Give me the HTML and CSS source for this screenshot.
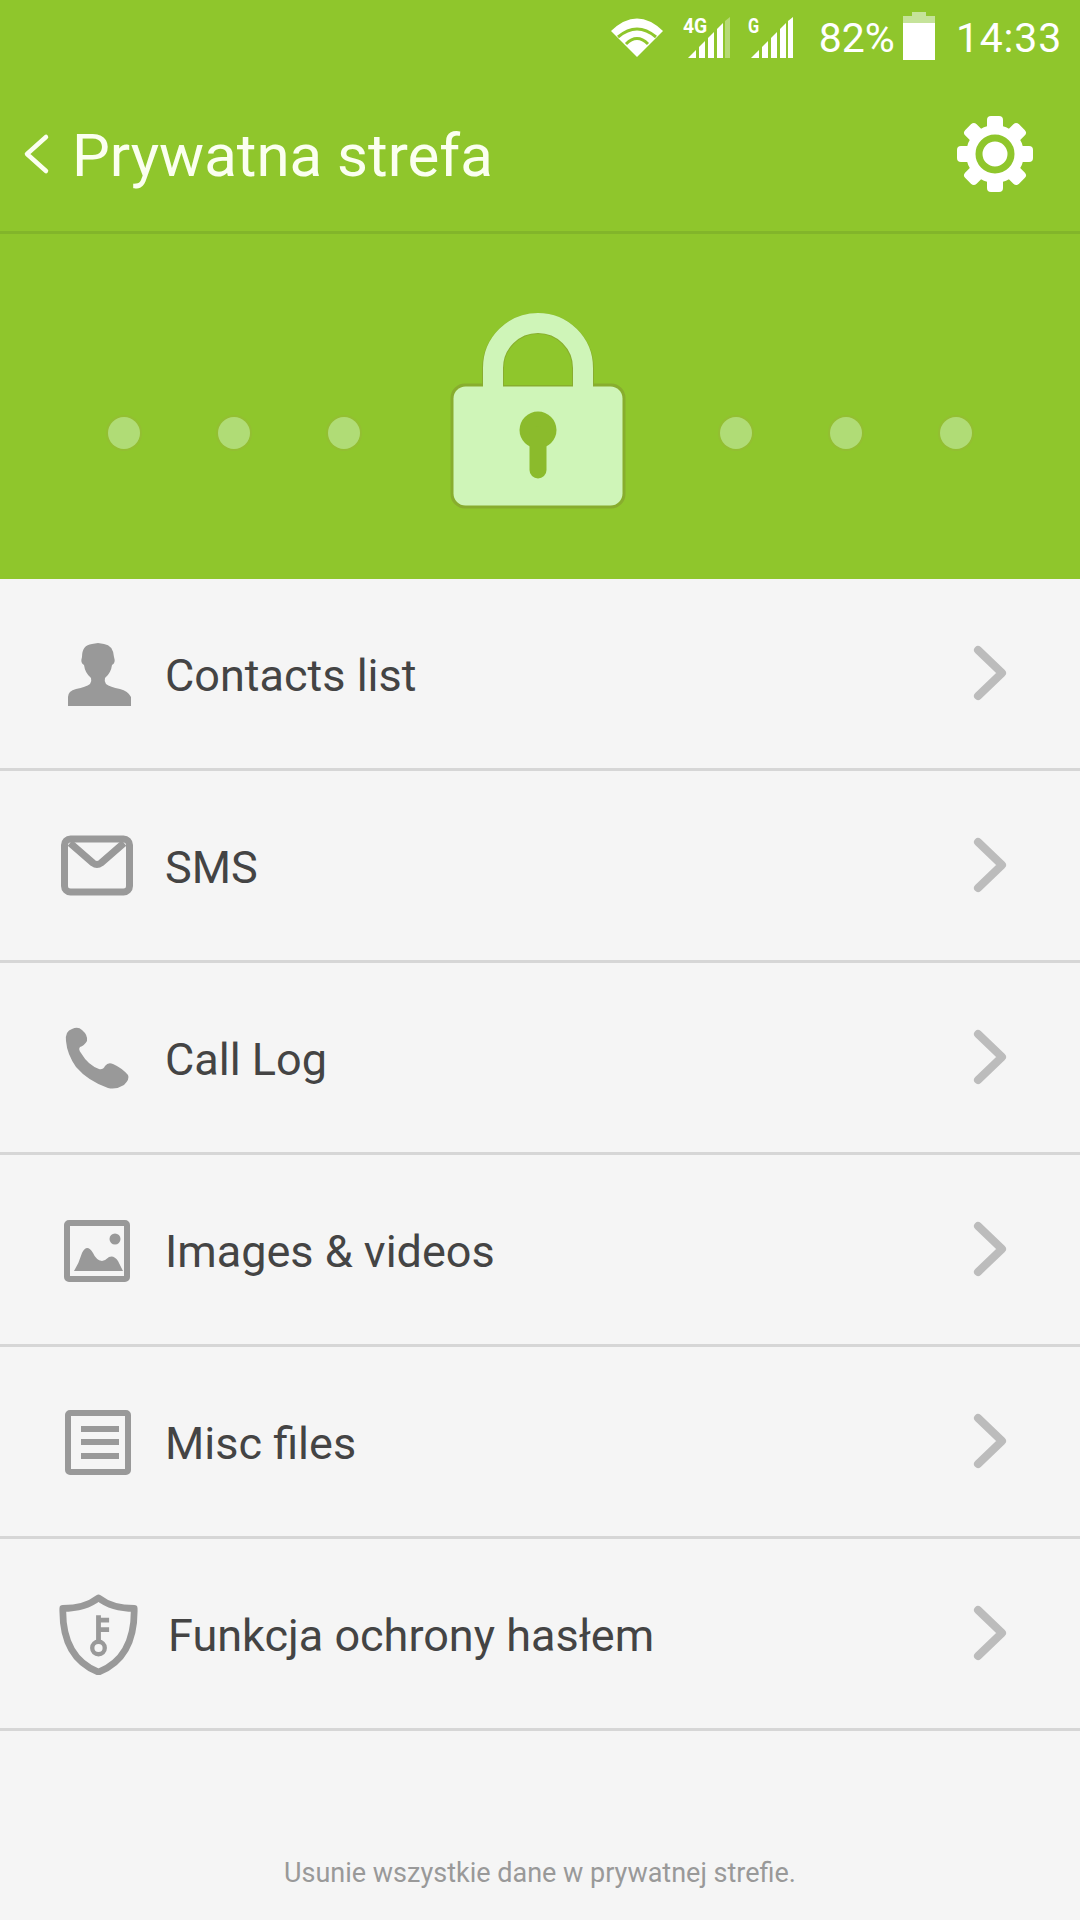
FILE: index.html
```html
<!DOCTYPE html>
<html lang="en">
<head>
  <meta charset="UTF-8" />
  <title>Prywatna strefa</title>
  <link rel="stylesheet" href="styles.css">
</head>
<body>
  <div class="status-bar">
    <svg class="ic-wifi" width="54" height="40" viewBox="0 0 54 40">
      <path d="M1 13Q27 -12 53 13L27 39Z" fill="#fff"/>
      <g fill="none" stroke="#8fc62c" stroke-width="3">
        <path d="M8 19Q27 3 46 19"/>
        <path d="M16 26Q27 15 38 26"/>
      </g>
    </svg>
    <div class="net">
      <span class="net-label net-label-4g">4G</span>
      <svg width="42" height="42" viewBox="0 0 42 42" fill="#fff">
        <path d="M0 41L8 33V41Z"/><path d="M11 41V30L17 24V41Z"/><path d="M20 41V21L26 15V41Z"/><path d="M29 41V12L35 6V41Z"/>
        <path d="M37 41V4L42 0V41Z" opacity="0.35"/>
      </svg>
    </div>
    <div class="net net-g">
      <span class="net-label">G</span>
      <svg width="42" height="42" viewBox="0 0 42 42" fill="#fff">
        <path d="M0 41L8 33V41Z"/><path d="M11 41V30L17 24V41Z"/><path d="M20 41V21L26 15V41Z"/><path d="M29 41V12L35 6V41Z"/>
        <path d="M37 41V4L42 0V41Z"/>
      </svg>
    </div>
    <span class="battery-pct">82%</span>
    <div class="battery"><div class="battery-cap"></div><div class="battery-top"></div><div class="battery-fill"></div></div>
    <span class="clock">14:33</span>
  </div>

  <header class="top-bar">
    <svg class="back" width="30" height="50" viewBox="0 0 30 50" fill="none" stroke="#fbfff0" stroke-width="4.500" stroke-linecap="round" stroke-linejoin="round">
      <path d="M24 8L5 25L24 42"/>
    </svg>
    <h1>Prywatna strefa</h1>
    <svg class="gear" width="78" height="78" viewBox="0 0 78 78">
      <g fill="#fff">
        <rect x="31" y="1" width="16" height="76" rx="4"/>
        <rect x="31" y="1" width="16" height="76" rx="4" transform="rotate(45 39 39)"/>
        <rect x="31" y="1" width="16" height="76" rx="4" transform="rotate(90 39 39)"/>
        <rect x="31" y="1" width="16" height="76" rx="4" transform="rotate(135 39 39)"/>
        <circle cx="39" cy="39" r="29"/>
      </g>
      <circle cx="39" cy="39" r="16" fill="#fff" stroke="#8fc62c" stroke-width="7"/>
    </svg>
  </header>

  <section class="hero">
    <div class="dots">
      <span class="dot"></span><span class="dot"></span><span class="dot"></span>
    </div>
    <svg class="lock" width="180" height="196" viewBox="2 0 180 196">
      <path d="M90 0a56 56 0 0 1 56 56V76H34V56a56 56 0 0 1 56 -56Z" fill="#88ad2e"/>
      <rect x="4" y="72" width="172" height="122" rx="13" fill="#88ad2e" stroke="#88ad2e" stroke-width="3"/>
      <path d="M55 73V55a35 35 0 0 1 70 0V73Z" fill="#8fc62c" stroke="#88ad2e" stroke-width="2"/>
      <path d="M45 76V55a45 45 0 0 1 90 0V76" fill="none" stroke="#cff5b8" stroke-width="20"/>
      <rect x="5.500" y="73.500" width="169" height="119" rx="12" fill="#cff5b8"/>
      <circle cx="90" cy="117" r="18.500" fill="#8bbb2c"/>
      <path d="M90 122V157" stroke="#8bbb2c" stroke-width="17" stroke-linecap="round"/>
    </svg>
    <div class="dots">
      <span class="dot"></span><span class="dot"></span><span class="dot"></span>
    </div>
  </section>

  <ul class="menu">
    <li class="row">
      <svg class="row-icon" width="80" height="80" viewBox="0 0 80 80" fill="#999">
        <path d="M10 71V62Q10 56 18 54Q28 52 32 49Q34 46 33 43Q27 38 26 30Q22 28 24 22Q24 10 34 9L40 8L46 9Q55 10 56 22Q58 28 54 30Q53 38 47 43Q46 46 48 49Q52 52 62 54Q70 56 73 62V71Z"/>
      </svg>
      <span>Contacts list</span>
      <svg class="chevron" width="36" height="58" viewBox="0 0 36 58" fill="none" stroke="#bcbcbc" stroke-width="8" stroke-linecap="round" stroke-linejoin="round"><path d="M5 5L29 28L5 51"/></svg>
    </li>
    <li class="row">
      <svg class="row-icon" width="80" height="80" viewBox="0 0 80 80" fill="none" stroke="#999" stroke-width="7">
        <rect x="6.500" y="12" width="65" height="53" rx="6"/>
        <path d="M12 16L35 36Q39 39 43 36L66 16" stroke-linejoin="round"/>
      </svg>
      <span>SMS</span>
      <svg class="chevron" width="36" height="58" viewBox="0 0 36 58" fill="none" stroke="#bcbcbc" stroke-width="8" stroke-linecap="round" stroke-linejoin="round"><path d="M5 5L29 28L5 51"/></svg>
    </li>
    <li class="row">
      <svg class="row-icon" width="80" height="80" viewBox="0 0 80 80" fill="#999">
        <path d="M8 22Q7 12 14 10Q20 7 24 11Q30 16 29 22Q26 27 22 28Q20 30 23 34Q30 46 41 50Q45 51 47 47Q50 43 55 45Q64 49 70 56Q72 60 66 66Q58 71 50 69Q30 62 18 48Q9 35 8 22Z"/>
      </svg>
      <span>Call Log</span>
      <svg class="chevron" width="36" height="58" viewBox="0 0 36 58" fill="none" stroke="#bcbcbc" stroke-width="8" stroke-linecap="round" stroke-linejoin="round"><path d="M5 5L29 28L5 51"/></svg>
    </li>
    <li class="row">
      <svg class="row-icon" width="80" height="80" viewBox="0 0 80 80" fill="#999">
        <rect x="9" y="12" width="60" height="56" rx="2" fill="none" stroke="#999" stroke-width="6"/>
        <circle cx="57" cy="28" r="5.500"/>
        <path d="M16 60Q21 52 24 42Q29 32 35 42Q38 49 44 50Q48 49 51 46Q56 44 60 50L65 60Z"/>
      </svg>
      <span>Images &amp; videos</span>
      <svg class="chevron" width="36" height="58" viewBox="0 0 36 58" fill="none" stroke="#bcbcbc" stroke-width="8" stroke-linecap="round" stroke-linejoin="round"><path d="M5 5L29 28L5 51"/></svg>
    </li>
    <li class="row">
      <svg class="row-icon" width="80" height="80" viewBox="0 0 80 80" fill="#999">
        <rect x="10" y="10" width="60" height="59" rx="2" fill="none" stroke="#999" stroke-width="6"/>
        <rect x="23" y="23" width="38" height="6"/>
        <rect x="23" y="36" width="38" height="6"/>
        <rect x="23" y="50" width="38" height="6"/>
      </svg>
      <span>Misc files</span>
      <svg class="chevron" width="36" height="58" viewBox="0 0 36 58" fill="none" stroke="#bcbcbc" stroke-width="8" stroke-linecap="round" stroke-linejoin="round"><path d="M5 5L29 28L5 51"/></svg>
    </li>
    <li class="row row-shield">
      <svg class="row-icon" width="81" height="81" viewBox="0 0 84 84" fill="none" stroke="#999" stroke-width="7">
        <path d="M5 15Q28 15 42 4Q56 15 79 15Q80 66 42 81Q4 66 5 15Z" stroke-linejoin="round"/>
        <circle cx="42" cy="56" r="6.500" stroke-width="4.500"/>
        <path d="M42 50V22M42 27H53M42 37H53" stroke-width="5"/>
      </svg>
      <span>Funkcja ochrony hasłem</span>
      <svg class="chevron" width="36" height="58" viewBox="0 0 36 58" fill="none" stroke="#bcbcbc" stroke-width="8" stroke-linecap="round" stroke-linejoin="round"><path d="M5 5L29 28L5 51"/></svg>
    </li>
  </ul>

  <p class="footer-note">Usunie wszystkie dane w prywatnej strefie.</p>
</body>
</html>
```

FILE: styles.css
```css
html, body {
  margin: 0;
  padding: 0;
}

body {
  width: 1080px;
  height: 1920px;
  overflow: hidden;
  background: #f5f5f5;
  font-family: Roboto, "Noto Sans", sans-serif;
  display: flex;
  flex-direction: column;
}

.status-bar {
  height: 76px;
  background: #8fc62c;
  display: flex;
  align-items: center;
  justify-content: flex-end;
  padding: 0 18px 0 0;
  color: #fff;
  box-sizing: border-box;
}

.ic-wifi {
  margin-right: 19px;
}

.net {
  position: relative;
  width: 47px;
  height: 42px;
  margin-right: 18px;
  display: flex;
  justify-content: flex-end;
}

.net-g {
  width: 45px;
  margin-right: 26px;
}

.net-label {
  position: absolute;
  left: 0;
  top: -3px;
  font-size: 21px;
  font-weight: 700;
  transform: scaleX(0.78);
  transform-origin: left top;
}

.net-label-4g {
  transform: scaleX(0.92);
}

.battery-pct {
  font-size: 41px;
  margin-right: 8px;
}

.battery {
  width: 32px;
  height: 48px;
  display: flex;
  flex-direction: column;
  align-items: center;
  margin-right: 21px;
  margin-bottom: 5px;
}

.battery-cap {
  width: 14px;
  height: 4px;
  background: #c5e39a;
}

.battery-top {
  width: 32px;
  height: 7px;
  background: #c5e39a;
}

.battery-fill {
  width: 32px;
  flex: 1;
  background: #fff;
}

.clock {
  font-size: 41px;
  letter-spacing: 0.8px;
}

.top-bar {
  height: 155px;
  background: #8fc62c;
  border-bottom: 3px solid #82b52a;
  display: flex;
  align-items: center;
  padding: 0 46px 0 22px;
}

.back {
  margin-right: 20px;
}

.top-bar h1 {
  flex: 1;
  margin: 0;
  padding-top: 4px;
  font-size: 60px;
  font-weight: 400;
  color: #fbfff0;
}

.hero {
  height: 345px;
  background: #8fc62c;
  display: flex;
  align-items: center;
  justify-content: center;
  gap: 90px;
}

.dots {
  display: flex;
  gap: 78px;
  margin-top: 52px;
}

.lock {
  margin-top: 8px;
}

.dot {
  width: 32px;
  height: 32px;
  border-radius: 50%;
  background: #b0dc76;
  box-shadow: 0 0 0 2px #93bf32;
}

.menu {
  list-style: none;
  margin: 0;
  padding: 0;
}

.row {
  height: 189px;
  border-bottom: 3px solid #d6d6d6;
  display: flex;
  align-items: center;
  padding: 0 71px 0 58px;
  font-size: 45px;
  color: #444;
}

.row span {
  flex: 1;
  margin-left: 27px;
  padding-top: 3px;
}

.row-icon {
  margin-top: 2px;
}

.row-shield span {
  margin-left: 29px;
}

.chevron {
  flex: none;
}

.footer-note {
  margin: 126px 0 0;
  text-align: center;
  font-size: 27px;
  color: #999;
}
```
